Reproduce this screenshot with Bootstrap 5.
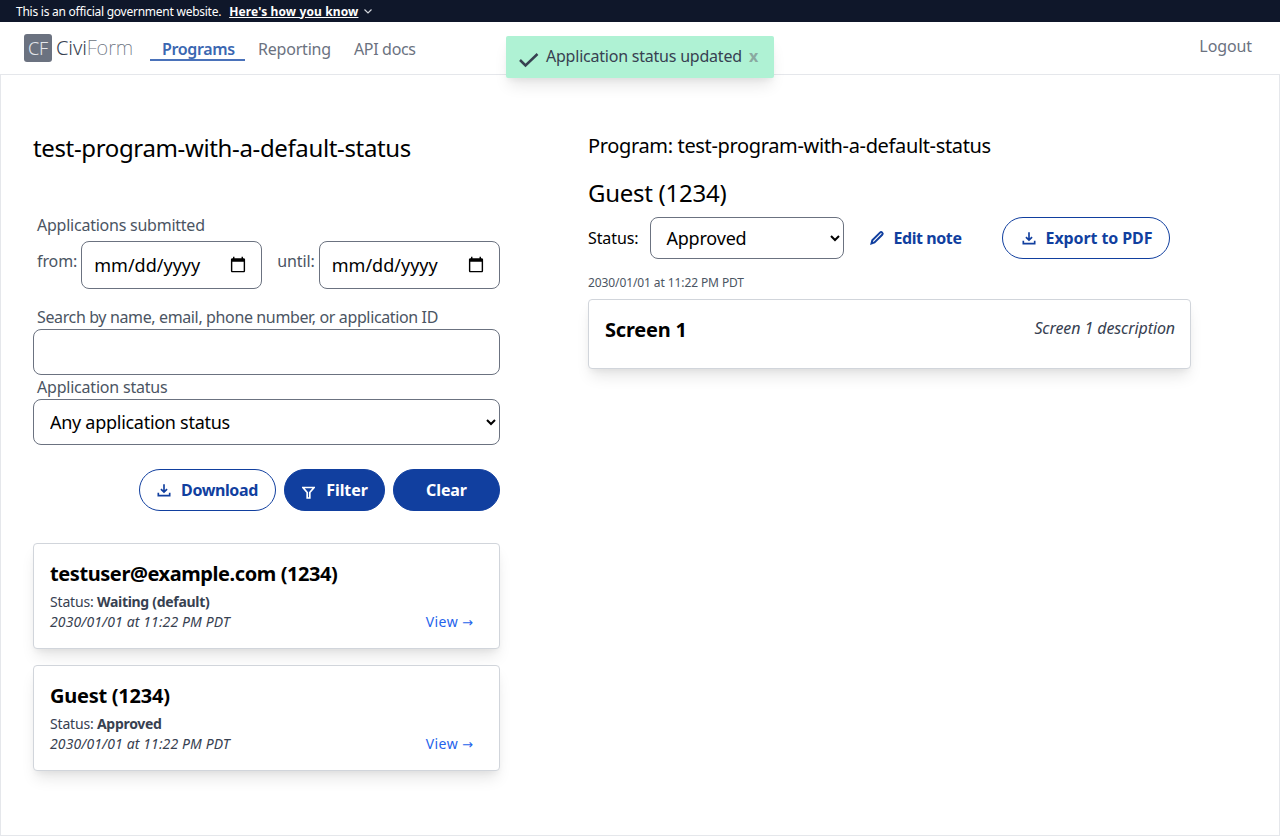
<!doctype html>
<html lang="en"><head><meta charset="utf-8"><title>CiviForm</title>
<link href="https://cdn.jsdelivr.net/npm/bootstrap@5.3.0/dist/css/bootstrap.min.css" rel="stylesheet">
<style>
html,body{height:836px;overflow:hidden}
body{font-family:"Noto Sans",sans-serif;font-size:16px;color:#374151;background:#fff;letter-spacing:-.1px}
.gov-bar{background:#0f172a;color:#fff;height:22px;font-size:12px;padding-left:16px;line-height:23px;gap:8px;letter-spacing:-.25px}
.gov-bar a{color:#fff;font-weight:700;letter-spacing:.12px}
.gov-chev{margin-left:-3px}
.top-nav{height:53px;border-bottom:1px solid #e5e7eb;padding-left:24px;padding-right:28px}
.logo-box{width:28px;height:28px;background:#6b7280;border-radius:3px;color:#e5e7eb;font-size:18px;line-height:28px;text-align:center;font-weight:300}
.logo-txt{font-size:20px;margin-left:4px;color:#374151;margin-right:17px;letter-spacing:-.1px;font-weight:300}
.logo-txt span{color:#6b7280;font-weight:200}
.nav-item-lnk{color:#6b7280;text-decoration:none;padding:0 12px;height:23px;line-height:22px;margin-top:2px;letter-spacing:-.2px}
.nav-item-lnk.on{color:#3b67b1;font-weight:600;border-bottom:2px solid #4a72ba;letter-spacing:-.35px;width:95px;margin-right:1px}
.nav-item-lnk.lnk-api{margin-left:-1px;letter-spacing:-.32px}
.logout-lnk{color:#6b7280;text-decoration:none;margin-top:-4px}
.toast-pop{position:absolute;left:506px;top:36px;width:268px;height:42px;background:#aff2d4;border-radius:2px;box-shadow:0 10px 15px -3px rgba(0,0,0,.1),0 4px 6px -2px rgba(0,0,0,.05);padding:0 16px 2px 12px;color:#374151;z-index:5;letter-spacing:-.22px}
.toast-ico{margin-right:7px;margin-top:8px}
.toast-x{color:#8aa9a0;font-weight:700;margin-left:auto}
.page-frame{height:761px;border:1px solid #e5e7eb;border-top:0;padding:57px 32px 0}
.col-left{width:467px}
.col-right{width:603px;margin-left:88px}
.prog-title{font-size:24px;line-height:32px;color:#000;font-weight:400;margin:0 0 49px;letter-spacing:-.36px}
.field-lbl{padding-left:4px;line-height:24px;color:#4b5563}
.lbl-apps{letter-spacing:-.24px}
.lbl-search{letter-spacing:-.37px}
.lbl-stat{letter-spacing:-.21px}
.date-row{margin-top:4px}
.date-cap{margin-top:8px}
.date-cap-2{margin-left:11px;margin-top:8px}
.date-in{width:181px;height:48px;border:1px solid #6b7280;border-radius:8px;padding:0 12px;font-size:18px;color:#000;background:#fff;font-family:inherit;letter-spacing:0}
.text-in{height:46px;border:1px solid #6b7280;border-radius:8px;display:block;width:100%;background:#fff}
.sel-in{height:46px;border:1px solid #6b7280;border-radius:8px;display:block;width:100%;font-size:18px;padding:0 12px;color:#000;background-color:#fff;font-family:inherit;letter-spacing:-.28px}
.pill{height:42px;border-radius:999px;font-weight:700;font-size:16px;display:inline-flex;align-items:center;justify-content:center;gap:10px;border:1px solid #113f9f;text-decoration:none}
.pill-fill{background:#113f9f;color:#fff}
.pill-line{background:#fff;color:#113f9f}
.pill-dl{width:137px;letter-spacing:-.4px}
.pill-filter{width:101px;gap:11px;padding-left:1px}
.pill-clear{width:107px}
.pill-export{width:168px;padding-left:1px}
.filter-ico{margin-top:5px}
.app-card{border:1px solid #d1d5db;border-radius:4px;background:#fff;box-shadow:0 10px 15px -3px rgba(0,0,0,.1),0 4px 6px -2px rgba(0,0,0,.05);padding:16px}
.card-a{margin-top:32px;height:106px}
.card-b{margin-top:16px;height:106px}
.app-name{font-size:20px;font-weight:700;line-height:28px;color:#000;letter-spacing:-.25px}
.name-long{letter-spacing:-.42px}
.app-meta{font-size:14px;line-height:20px;letter-spacing:-.18px}
.app-meta b{letter-spacing:-.3px}
.app-date{letter-spacing:.12px}
.app-view{color:#2563eb;text-decoration:none;padding-right:10px;letter-spacing:.4px}
.arrow-gl{font-family:"DejaVu Sans",sans-serif;font-size:13px;letter-spacing:0}
.prog-sub{font-size:20px;line-height:28px;color:#000;margin:0 0 17px;font-weight:400;letter-spacing:-.35px}
.guest-h{font-size:24px;line-height:32px;color:#000;margin:0 0 8px;letter-spacing:-.27px}
.stat-lbl{color:#000;margin-right:12px}
.stat-sel{width:194px;height:42px;border:1px solid #6b7280;border-radius:8px;font-size:18px;padding:0 11px;color:#000;background:#fff;font-family:inherit;letter-spacing:-.2px}
.edit-note{color:#113f9f;font-weight:700;text-decoration:none;margin-left:25px;width:133px;letter-spacing:-.42px}
.time-sm{font-size:12px;line-height:16px;color:#4b5563;margin-top:16px}
.screen-h{font-size:20px;font-weight:700;color:#000;line-height:28px;letter-spacing:-.2px}
.screen-card{height:70px;margin-top:8px;padding:16px 15px 16px 16px}
</style></head>
<body>
<div class="gov-bar d-flex align-items-center">
  <span>This is an official government website.</span>
  <a href="#">Here's how you know</a>
  <svg class="gov-chev" width="10" height="10" viewBox="0 0 10 10" fill="none" stroke="#d1d5db" stroke-width="1.2"><path d="M1.5 3.5 5 7l3.5-3.5"/></svg>
</div>
<nav class="top-nav d-flex align-items-center">
  <div class="logo-box">CF</div>
  <div class="logo-txt">Civi<span>Form</span></div>
  <a class="nav-item-lnk on" href="#">Programs</a>
  <a class="nav-item-lnk" href="#">Reporting</a>
  <a class="nav-item-lnk lnk-api" href="#">API docs</a>
  <a class="logout-lnk ms-auto" href="#">Logout</a>
</nav>
<div class="toast-pop d-flex align-items-center">
  <svg class="toast-ico" width="21" height="20" viewBox="0 0 21 20" fill="none" stroke="#374151" stroke-width="2.5"><path d="M2 10l5.5 5.5L19.500 4"/></svg>
  <span>Application status updated</span>
  <span class="toast-x">x</span>
</div>
<main class="page-frame d-flex">
  <section class="col-left">
    <h1 class="prog-title">test-program-with-a-default-status</h1>
    <div class="field-lbl lbl-apps">Applications submitted</div>
    <div class="d-flex align-items-start mb-3 date-row">
      <span class="field-lbl date-cap">from:</span>
      <input class="date-in ms-1" type="date">
      <span class="field-lbl date-cap-2">until:</span>
      <input class="date-in ms-1" type="date">
    </div>
    <div class="field-lbl lbl-search">Search by name, email, phone number, or application ID</div>
    <input class="text-in" type="text">
    <div class="field-lbl lbl-stat">Application status</div>
    <select class="sel-in"><option>Any application status</option></select>
    <div class="d-flex justify-content-end gap-2 mt-4">
      <a class="pill pill-line pill-dl" href="#">
        <svg width="14" height="14" viewBox="0 0 16 16" fill="none" stroke="#113f9f" stroke-width="1.9"><path d="M8 1.500v9M4.500 7 8 10.500 11.500 7M1.500 11v3.500h13V11"/></svg>Download</a>
      <a class="pill pill-fill pill-filter" href="#">
        <svg class="filter-ico" width="13" height="13" viewBox="0 0 13 13" fill="none" stroke="#fff" stroke-width="1.7"><path d="M1 1.500h11L7.800 6.500V12H5.200V6.500z"/></svg>Filter</a>
      <a class="pill pill-fill pill-clear" href="#">Clear</a>
    </div>
    <div class="app-card card-a">
      <div class="app-name name-long">testuser@example.com (1234)</div>
      <div class="app-meta mt-1">Status: <b>Waiting (default)</b></div>
      <div class="app-meta d-flex justify-content-between"><i class="app-date">2030/01/01 at 11:22 PM PDT</i><a class="app-view" href="#">View <span class="arrow-gl">→</span></a></div>
    </div>
    <div class="app-card card-b">
      <div class="app-name">Guest (1234)</div>
      <div class="app-meta mt-1">Status: <b>Approved</b></div>
      <div class="app-meta d-flex justify-content-between"><i class="app-date">2030/01/01 at 11:22 PM PDT</i><a class="app-view" href="#">View <span class="arrow-gl">→</span></a></div>
    </div>
  </section>
  <section class="col-right">
    <h2 class="prog-sub">Program: test-program-with-a-default-status</h2>
    <div class="guest-h">Guest (1234)</div>
    <div class="d-flex align-items-center">
      <span class="stat-lbl">Status:</span>
      <select class="stat-sel"><option>Approved</option></select>
      <a class="edit-note d-inline-flex align-items-center gap-2" href="#">
        <svg width="16" height="16" viewBox="0 0 16 16" fill="none" stroke="#113f9f" stroke-width="2"><path d="M2.500 13.500l.8-3.200 7.700-7.700a1.500 1.500 0 0 1 2.200 2.200l-7.700 7.700z"/></svg>Edit note</a>
      <a class="pill pill-line pill-export" href="#">
        <svg width="14" height="14" viewBox="0 0 16 16" fill="none" stroke="#113f9f" stroke-width="1.9"><path d="M8 1.500v9M4.500 7 8 10.500 11.500 7M1.500 11v3.500h13V11"/></svg>Export to PDF</a>
    </div>
    <div class="time-sm">2030/01/01 at 11:22 PM PDT</div>
    <div class="app-card screen-card d-flex justify-content-between align-items-start">
      <div class="screen-h">Screen 1</div><i>Screen 1 description</i>
    </div>
  </section>
</main>
<script src="https://cdn.jsdelivr.net/npm/bootstrap@5.3.0/dist/js/bootstrap.bundle.min.js"></script>
</body></html>
